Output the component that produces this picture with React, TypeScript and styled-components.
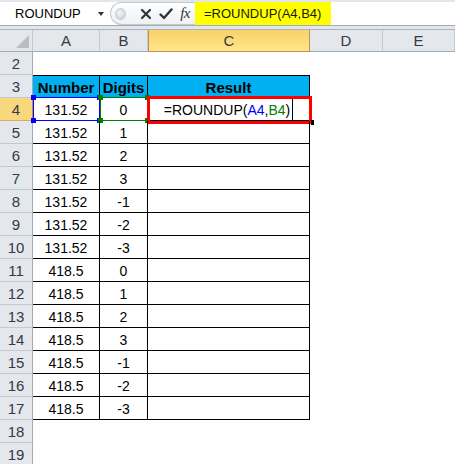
import React from 'react';
import styled, { createGlobalStyle, css } from 'styled-components';

const GlobalStyle = createGlobalStyle`
  html, body {
    margin: 0;
    padding: 0;
    background: #ffffff;
    overflow: hidden;
  }
  body {
    font-family: 'Liberation Sans', Arial, sans-serif;
  }
`;

const COLS = ['A', 'B', 'C', 'D', 'E'];

const DATA: [string, string][] = [
  ['131.52', '0'],
  ['131.52', '1'],
  ['131.52', '2'],
  ['131.52', '3'],
  ['131.52', '-1'],
  ['131.52', '-2'],
  ['131.52', '-3'],
  ['418.5', '0'],
  ['418.5', '1'],
  ['418.5', '2'],
  ['418.5', '3'],
  ['418.5', '-1'],
  ['418.5', '-2'],
  ['418.5', '-3'],
];

const Window = styled.div`
  width: 455px;
  height: 464px;
  overflow: hidden;
  display: flex;
  flex-direction: column;
  background: #ffffff;
`;

/* ---------- formula bar ---------- */

const FormulaBar = styled.div`
  flex: none;
  height: 30px;
  box-sizing: border-box;
  padding-top: 2px;
  background: #e3e7ec;
  border-bottom: 1px solid #aab3be;
`;

const BarInner = styled.div`
  height: 24px;
  box-sizing: border-box;
  display: flex;
  align-items: stretch;
  background: #ffffff;
  border-bottom: 1px solid #a3acb7;
`;

const NameBox = styled.div`
  position: relative;
  width: 110px;
  flex: none;
  box-sizing: border-box;
  display: flex;
  align-items: center;
  padding-left: 15px;
  font-size: 13px;
  color: #000;
`;

const DropArrow = styled.span`
  position: absolute;
  right: 6px;
  top: 10px;
  width: 0;
  height: 0;
  border-left: 3.5px solid transparent;
  border-right: 3.5px solid transparent;
  border-top: 4px solid #333;
`;

const ButtonGroup = styled.div`
  width: 85px;
  flex: none;
  box-sizing: border-box;
  display: flex;
  align-items: center;
  border: 1px solid #c3c9d1;
  border-right: none;
  border-radius: 12px 0 0 12px;
  background: linear-gradient(#ffffff, #eef0f3);
`;

const Dot = styled.span`
  width: 10px;
  height: 10px;
  margin-left: 4px;
  border-radius: 50%;
  background: radial-gradient(circle at 40% 40%, #f4f5f7, #c2c7ce);
  border: 1px solid #c9ced5;
`;

const BarButton = styled.span<{ $w: number; $gap?: number }>`
  width: ${p => p.$w}px;
  margin-left: ${p => p.$gap ?? 0}px;
  display: flex;
  align-items: center;
  justify-content: center;
  color: #2b2b2b;
`;

const Fx = styled.span`
  font-family: 'Liberation Serif', 'Times New Roman', serif;
  font-style: italic;
  font-size: 15px;
  color: #333;
  letter-spacing: -0.5px;
`;

const FormulaText = styled.div`
  flex: none;
  width: 136px;
  box-sizing: border-box;
  display: flex;
  align-items: center;
  padding-left: 9px;
  background: #ffff00;
  font-size: 13px;
  color: #1a1a00;
`;

/* ---------- sheet ---------- */

const Sheet = styled.div`
  display: grid;
  grid-template-columns: 33px 67px 48px 162px 73px 72px;
  grid-template-rows: 22px;
  grid-auto-rows: 23px;
`;

const headerBase = css`
  box-sizing: border-box;
  display: flex;
  align-items: center;
  justify-content: center;
  font-size: 15px;
  color: #333a44;
`;

const Corner = styled.div`
  ${headerBase};
  position: relative;
  background: #e4e7ec;
  border-right: 1px solid #c3c9d1;
  border-bottom: 1px solid #9eabb9;

  &::after {
    content: '';
    position: absolute;
    right: 3px;
    bottom: 3px;
    width: 0;
    height: 0;
    border-left: 13px solid transparent;
    border-bottom: 13px solid #b9bec5;
  }
`;

const ColHeader = styled.div<{ $active?: boolean }>`
  ${headerBase};
  background: ${p => (p.$active ? 'linear-gradient(#f8d169, #ffe68a)' : '#e4e7ec')};
  border-right: 1px solid ${p => (p.$active ? '#c29050' : '#c3c9d1')};
  border-bottom: 1px solid ${p => (p.$active ? '#c29050' : '#9eabb9')};
  ${p => p.$active && 'border-left: 1px solid #c29050;'}
`;

const RowHeader = styled.div<{ $active?: boolean }>`
  ${headerBase};
  background: ${p => (p.$active ? '#f9d77c' : '#e4e7ec')};
  border-bottom: 1px solid ${p => (p.$active ? '#d9ad5a' : '#c3c9d1')};
  border-right: 1px solid ${p => (p.$active ? '#c29050' : '#9eabb9')};
`;

const Cell = styled.div<{ $table?: boolean; $top?: boolean; $head?: boolean }>`
  position: relative;
  box-sizing: border-box;
  display: flex;
  align-items: center;
  justify-content: center;
  padding-top: 1px;
  font-size: 14px;
  color: #000;
  white-space: nowrap;
  ${p =>
    p.$table &&
    css`
      border-right: 1px solid #000;
      border-bottom: 1px solid #000;
    `}
  ${p => p.$top && 'border-top: 1px solid #000;'}
  ${p =>
    p.$head &&
    css`
      background: #00b0f0;
      font-weight: bold;
      font-size: 15px;
    `}
`;

const RefFrame = styled.span<{ $color: string }>`
  position: absolute;
  top: -1px;
  left: 0;
  right: -1px;
  bottom: -1px;
  border: 1px solid ${p => p.$color};
  pointer-events: none;
`;

const FrameDot = styled.span<{ $color: string; $x: 'left' | 'right'; $y: 'top' | 'bottom' }>`
  position: absolute;
  ${p => p.$x}: -3px;
  ${p => p.$y}: -3px;
  width: 5px;
  height: 5px;
  background: ${p => p.$color};
`;

const EditFrame = styled.span`
  position: absolute;
  top: -2px;
  left: -1px;
  right: -3px;
  bottom: -4px;
  border: 3px solid #ff0000;
  pointer-events: none;
`;

const FillHandle = styled.span`
  position: absolute;
  right: -5px;
  bottom: -5px;
  width: 3px;
  height: 5px;
  background: #000;
`;

const Ref = styled.span<{ $color: string }>`
  color: ${p => p.$color};
`;

const Caret = styled.span`
  display: inline-block;
  width: 1px;
  height: 21px;
  margin-left: 2px;
  background: #000;
  vertical-align: middle;
`;

function Frame({ color }: { color: string }) {
  return (
    <RefFrame $color={color}>
      <FrameDot $color={color} $x="left" $y="top" />
      <FrameDot $color={color} $x="right" $y="top" />
      <FrameDot $color={color} $x="left" $y="bottom" />
      <FrameDot $color={color} $x="right" $y="bottom" />
    </RefFrame>
  );
}

function CancelIcon() {
  return (
    <svg width="12" height="12" viewBox="0 0 12 12">
      <path d="M2 2 L10 10 M10 2 L2 10" stroke="#333" strokeWidth="2.2" strokeLinecap="round" />
    </svg>
  );
}

function EnterIcon() {
  return (
    <svg width="14" height="12" viewBox="0 0 14 12">
      <path d="M1.5 6.5 L5 10 L12.5 1.5" stroke="#333" strokeWidth="2.4" fill="none" strokeLinecap="round" strokeLinejoin="round" />
    </svg>
  );
}

export default function App() {
  const blue = '#0000ff';
  const green = '#008000';

  return (
    <Window>
      <GlobalStyle />
      <FormulaBar>
        <BarInner>
          <NameBox>
            ROUNDUP
            <DropArrow />
          </NameBox>
          <ButtonGroup>
            <Dot />
            <BarButton $w={26} $gap={8}>
              <CancelIcon />
            </BarButton>
            <BarButton $w={20}>
              <EnterIcon />
            </BarButton>
            <BarButton $w={22}>
              <Fx>fx</Fx>
            </BarButton>
          </ButtonGroup>
          <FormulaText>=ROUNDUP(A4,B4)</FormulaText>
        </BarInner>
      </FormulaBar>

      <Sheet>
        <Corner />
        {COLS.map(c => (
          <ColHeader key={c} $active={c === 'C'}>
            {c}
          </ColHeader>
        ))}

        <RowHeader>2</RowHeader>
        {COLS.map(c => (
          <Cell key={c} />
        ))}

        <RowHeader>3</RowHeader>
        <Cell $table $top $head>Number</Cell>
        <Cell $table $top $head>Digits</Cell>
        <Cell $table $top $head>Result</Cell>
        <Cell />
        <Cell />

        {DATA.map(([num, digits], i) => {
          const row = i + 4;
          const first = row === 4;
          return (
            <React.Fragment key={row}>
              <RowHeader $active={first}>{row}</RowHeader>
              <Cell $table>
                {num}
                {first && <Frame color={blue} />}
              </Cell>
              <Cell $table>
                {digits}
                {first && <Frame color={green} />}
              </Cell>
              <Cell $table>
                {first && (
                  <>
                    <span>
                      =ROUNDUP(<Ref $color={blue}>A4</Ref>,<Ref $color={green}>B4</Ref>)
                    </span>
                    <Caret />
                    <EditFrame />
                    <FillHandle />
                  </>
                )}
              </Cell>
              <Cell />
              <Cell />
            </React.Fragment>
          );
        })}

        {[18, 19].map(row => (
          <React.Fragment key={row}>
            <RowHeader>{row}</RowHeader>
            {COLS.map(c => (
              <Cell key={c} />
            ))}
          </React.Fragment>
        ))}
      </Sheet>
    </Window>
  );
}
